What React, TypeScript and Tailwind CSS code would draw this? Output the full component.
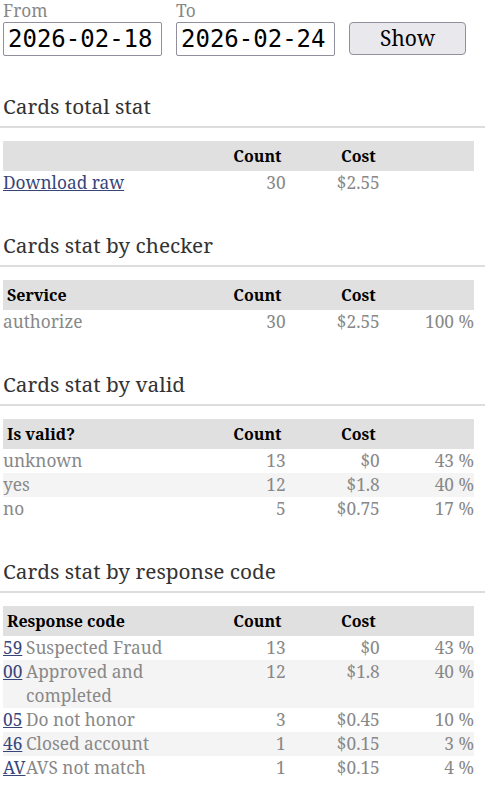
const serif = "font-['Noto_Serif',serif]";

type Row = { label: React.ReactNode; count: string; cost: string; pct?: string };

function Code({ code, text }: { code: string; text: string }) {
  return (
    <div className="flex">
      <a href="#" className="w-[23px] shrink-0 text-[#37457a] underline">
        {code}
      </a>
      <span>{text}</span>
    </div>
  );
}

function StatTable({ first, rows }: { first: string; rows: Row[] }) {
  return (
    <table className="ml-[3px] w-[471px] table-fixed border-collapse">
      <colgroup>
        <col className="w-[40%]" />
        <col className="w-[20%]" />
        <col className="w-[20%]" />
        <col className="w-[20%]" />
      </colgroup>
      <thead>
        <tr className="bg-[#e0e0e0] text-[16px] font-bold leading-[22px] text-black">
          <th className="p-1 text-left">{first}</th>
          <th className="p-1 text-right">Count</th>
          <th className="p-1 text-right">Cost</th>
          <th className="p-1"></th>
        </tr>
      </thead>
      <tbody className="text-[17.3px] leading-[24px] text-[#888]">
        {rows.map((r, i) => (
          <tr key={i} className={i % 2 === 1 ? "bg-[#f4f4f4]" : ""}>
            <td className="p-0 text-left align-top">{r.label}</td>
            <td className="p-0 text-right align-top">{r.count}</td>
            <td className="p-0 text-right align-top">{r.cost}</td>
            <td className="p-0 text-right align-top">{r.pct}</td>
          </tr>
        ))}
      </tbody>
    </table>
  );
}

function Section({ title, first, rows }: { title: string; first: string; rows: Row[] }) {
  return (
    <section className="mt-[36px]">
      <h2 className="px-[3px] text-[20.8px] leading-[28px] text-[#333]">{title}</h2>
      <hr className="mt-[6px] mb-[13px] h-[2px] border-0 bg-[#dddddd]" />
      <StatTable first={first} rows={rows} />
    </section>
  );
}

export default function App() {
  return (
    <div className={`${serif} min-h-screen bg-white`}>
      <div className="flex items-end px-[3px]">
        <label className="flex flex-col">
          <span className="text-[17.3px] leading-[22px] text-[#888]">From</span>
          <input
            readOnly
            defaultValue="2026-02-18"
            className="h-[34px] w-[159px] rounded-[2px] border border-[#8f8f9d] bg-white px-[4px] font-['DejaVu_Sans_Mono',monospace] text-[24px] text-black outline-none"
          />
        </label>
        <label className="ml-[14px] flex flex-col">
          <span className="text-[17.3px] leading-[22px] text-[#888]">To</span>
          <input
            readOnly
            defaultValue="2026-02-24"
            className="h-[34px] w-[159px] rounded-[2px] border border-[#8f8f9d] bg-white px-[4px] font-['DejaVu_Sans_Mono',monospace] text-[24px] text-black outline-none"
          />
        </label>
        <button className="mb-[1px] ml-[14px] h-[33px] w-[117px] rounded-[4px] border border-[#8f8f9d] bg-[#e9e9ed] text-[21px] leading-none text-black">
          Show
        </button>
      </div>

      <Section
        title="Cards total stat"
        first=""
        rows={[
          {
            label: (
              <a href="#" className="text-[#37457a] underline">
                Download raw
              </a>
            ),
            count: "30",
            cost: "$2.55",
          },
        ]}
      />
      <Section
        title="Cards stat by checker"
        first="Service"
        rows={[{ label: "authorize", count: "30", cost: "$2.55", pct: "100 %" }]}
      />
      <Section
        title="Cards stat by valid"
        first="Is valid?"
        rows={[
          { label: "unknown", count: "13", cost: "$0", pct: "43 %" },
          { label: "yes", count: "12", cost: "$1.8", pct: "40 %" },
          { label: "no", count: "5", cost: "$0.75", pct: "17 %" },
        ]}
      />
      <Section
        title="Cards stat by response code"
        first="Response code"
        rows={[
          { label: <Code code="59" text="Suspected Fraud" />, count: "13", cost: "$0", pct: "43 %" },
          { label: <Code code="00" text="Approved and completed" />, count: "12", cost: "$1.8", pct: "40 %" },
          { label: <Code code="05" text="Do not honor" />, count: "3", cost: "$0.45", pct: "10 %" },
          { label: <Code code="46" text="Closed account" />, count: "1", cost: "$0.15", pct: "3 %" },
          { label: <Code code="AV" text="AVS not match" />, count: "1", cost: "$0.15", pct: "4 %" },
        ]}
      />
    </div>
  );
}
